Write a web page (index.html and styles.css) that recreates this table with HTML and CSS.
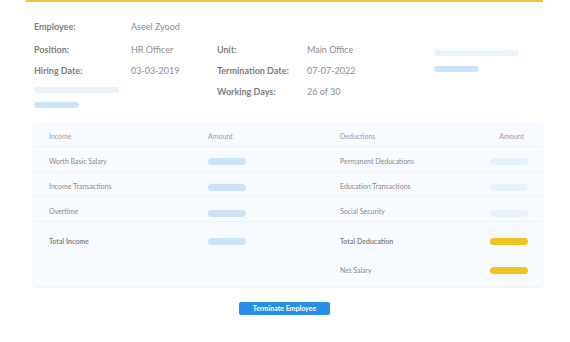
FILE: index.html
```html
<!DOCTYPE html>
<html>
<head>
<meta charset="utf-8">
<link rel="stylesheet" href="styles.css">
</head>
<body>
<div class="page">
  <div class="info">
    <div class="lbl r1">Employee:</div><div class="val r1">Aseel Zyood</div>
    <div class="lbl r2">Position:</div><div class="val r2">HR Officer</div>
    <div class="lbl r2">Unit:</div><div class="val r2">Main Office</div>
    <div class="side-bars">
      <span class="bar bar-light bar-long"></span>
      <span class="bar bar-mid bar-short"></span>
    </div>
    <div class="lbl r3">Hiring Date:</div><div class="val r3">03-03-2019</div>
    <div class="lbl r3">Termination Date:</div><div class="val r3">07-07-2022</div>
    <div class="left-bars">
      <span class="bar bar-light bar-long"></span>
      <span class="bar bar-mid bar-short"></span>
    </div>
    <div class="lbl r4 c3">Working Days:</div><div class="val r4 c4">26 of 30</div>
  </div>

  <div class="card">
    <div class="trow thead">
      <div class="cell">Income</div>
      <div class="cell">Amount</div>
      <div class="cell">Deductions</div>
      <div class="cell right">Amount</div>
    </div>
    <div class="trow">
      <div class="cell">Worth Basic Salary</div>
      <div class="cell"><span class="pill pill-blue"></span></div>
      <div class="cell">Permanent Deducations</div>
      <div class="cell right"><span class="pill pill-pale"></span></div>
    </div>
    <div class="trow">
      <div class="cell">Income Transactions</div>
      <div class="cell"><span class="pill pill-blue low"></span></div>
      <div class="cell">Education Transactions</div>
      <div class="cell right"><span class="pill pill-pale low"></span></div>
    </div>
    <div class="trow">
      <div class="cell">Overtime</div>
      <div class="cell"><span class="pill pill-blue lower"></span></div>
      <div class="cell">Social Security</div>
      <div class="cell right"><span class="pill pill-pale lower"></span></div>
    </div>
    <div class="trow total">
      <div class="cell strong">Total Income</div>
      <div class="cell"><span class="pill pill-blue"></span></div>
      <div class="cell strong">Total Deducation</div>
      <div class="cell right"><span class="pill pill-yellow"></span></div>
    </div>
    <div class="trow net">
      <div class="cell"></div>
      <div class="cell"></div>
      <div class="cell">Net Salary</div>
      <div class="cell right"><span class="pill pill-yellow"></span></div>
    </div>
  </div>

  <div class="actions">
    <button class="btn">Terminate Employee</button>
  </div>
</div>
</body>
</html>
```

FILE: styles.css
```css
* { box-sizing: border-box; }
html, body { margin: 0; padding: 0; background: #ffffff; }
body { font-family: "Lato", "Noto Sans", sans-serif; color: #888; }

.page {
  width: 517px;
  margin-left: 26px;
  border-top: 2px solid #ecc545;
}

.info {
  display: grid;
  grid-template-columns: 97px 86px 90px 127px 1fr;
  grid-template-rows: 23px 21px 21px 27px;
  padding: 14px 0 0 8px;
  font-size: 9px;
}
.info > div { line-height: 21px; align-self: start; }
.lbl { font-weight: 700; color: #7d7d7d; }
.val { color: #8d8d8d; }
.r1 { grid-row: 1; }
.r2 { grid-row: 2; }
.r3 { grid-row: 3; }
.r4 { grid-row: 4; }
.c3 { grid-column: 3; }
.c4 { grid-column: 4; }

.side-bars {
  grid-column: 5;
  grid-row: 2 / 4;
  display: flex;
  flex-direction: column;
  gap: 10px;
  padding-top: 11px;
}
.left-bars {
  grid-column: 1 / 3;
  grid-row: 4;
  display: flex;
  flex-direction: column;
  gap: 9px;
  padding-top: 6px;
}
.bar { display: block; height: 6px; border-radius: 3px; }
.bar-light { background: #e9f3fd; }
.bar-mid { background: #cde3f7; }
.bar-long { width: 85px; }
.bar-short { width: 45px; }

.card {
  margin: 14px 0 0 7px;
  width: 510px;
  height: 164px;
  background: #f7fbff;
  border-radius: 3px;
  box-shadow: 0 1px 3px rgba(0, 0, 0, 0.09);
  font-size: 7px;
}
.trow {
  display: grid;
  grid-template-columns: 159px 132px 150px 53px;
  height: 25px;
  border-bottom: 1px solid #edf2f8;
  padding-left: 16px;
  align-items: center;
}
.thead { padding-top: 4px; }
.trow:not(.thead) .cell { padding-top: 4px; }
.cell { color: #8a8a8a; }
.thead .cell { color: #9d9d9d; }
.right { text-align: right; padding-right: 19px; }
.trow:not(.thead) .right { padding-right: 15px; }
.strong { font-weight: 700; color: #858585; }

.trow.total { height: 36px; border-bottom: none; }
.trow.total .cell { padding-top: 1px; }
.trow.net { height: 24px; border-bottom: none; }
.trow.net .cell { padding-top: 0; }

.pill {
  display: inline-block;
  width: 38px;
  height: 7px;
  border-radius: 4px;
  vertical-align: middle;
}
.pill.low { position: relative; top: 1px; }
.pill.lower { position: relative; top: 2px; }
.pill-blue { background: #cde3f7; }
.pill-pale { background: #e8f2fc; }
.pill-yellow { background: #f0c420; }

.actions {
  display: flex;
  justify-content: center;
  margin-top: 16px;
}
.btn {
  width: 91px;
  height: 13px;
  padding: 0;
  border: none;
  border-radius: 2px;
  background: #2a8de6;
  color: #ffffff;
  font-family: "Lato", "Noto Sans", sans-serif;
  font-size: 7px;
  font-weight: 700;
  line-height: 13px;
}
```
